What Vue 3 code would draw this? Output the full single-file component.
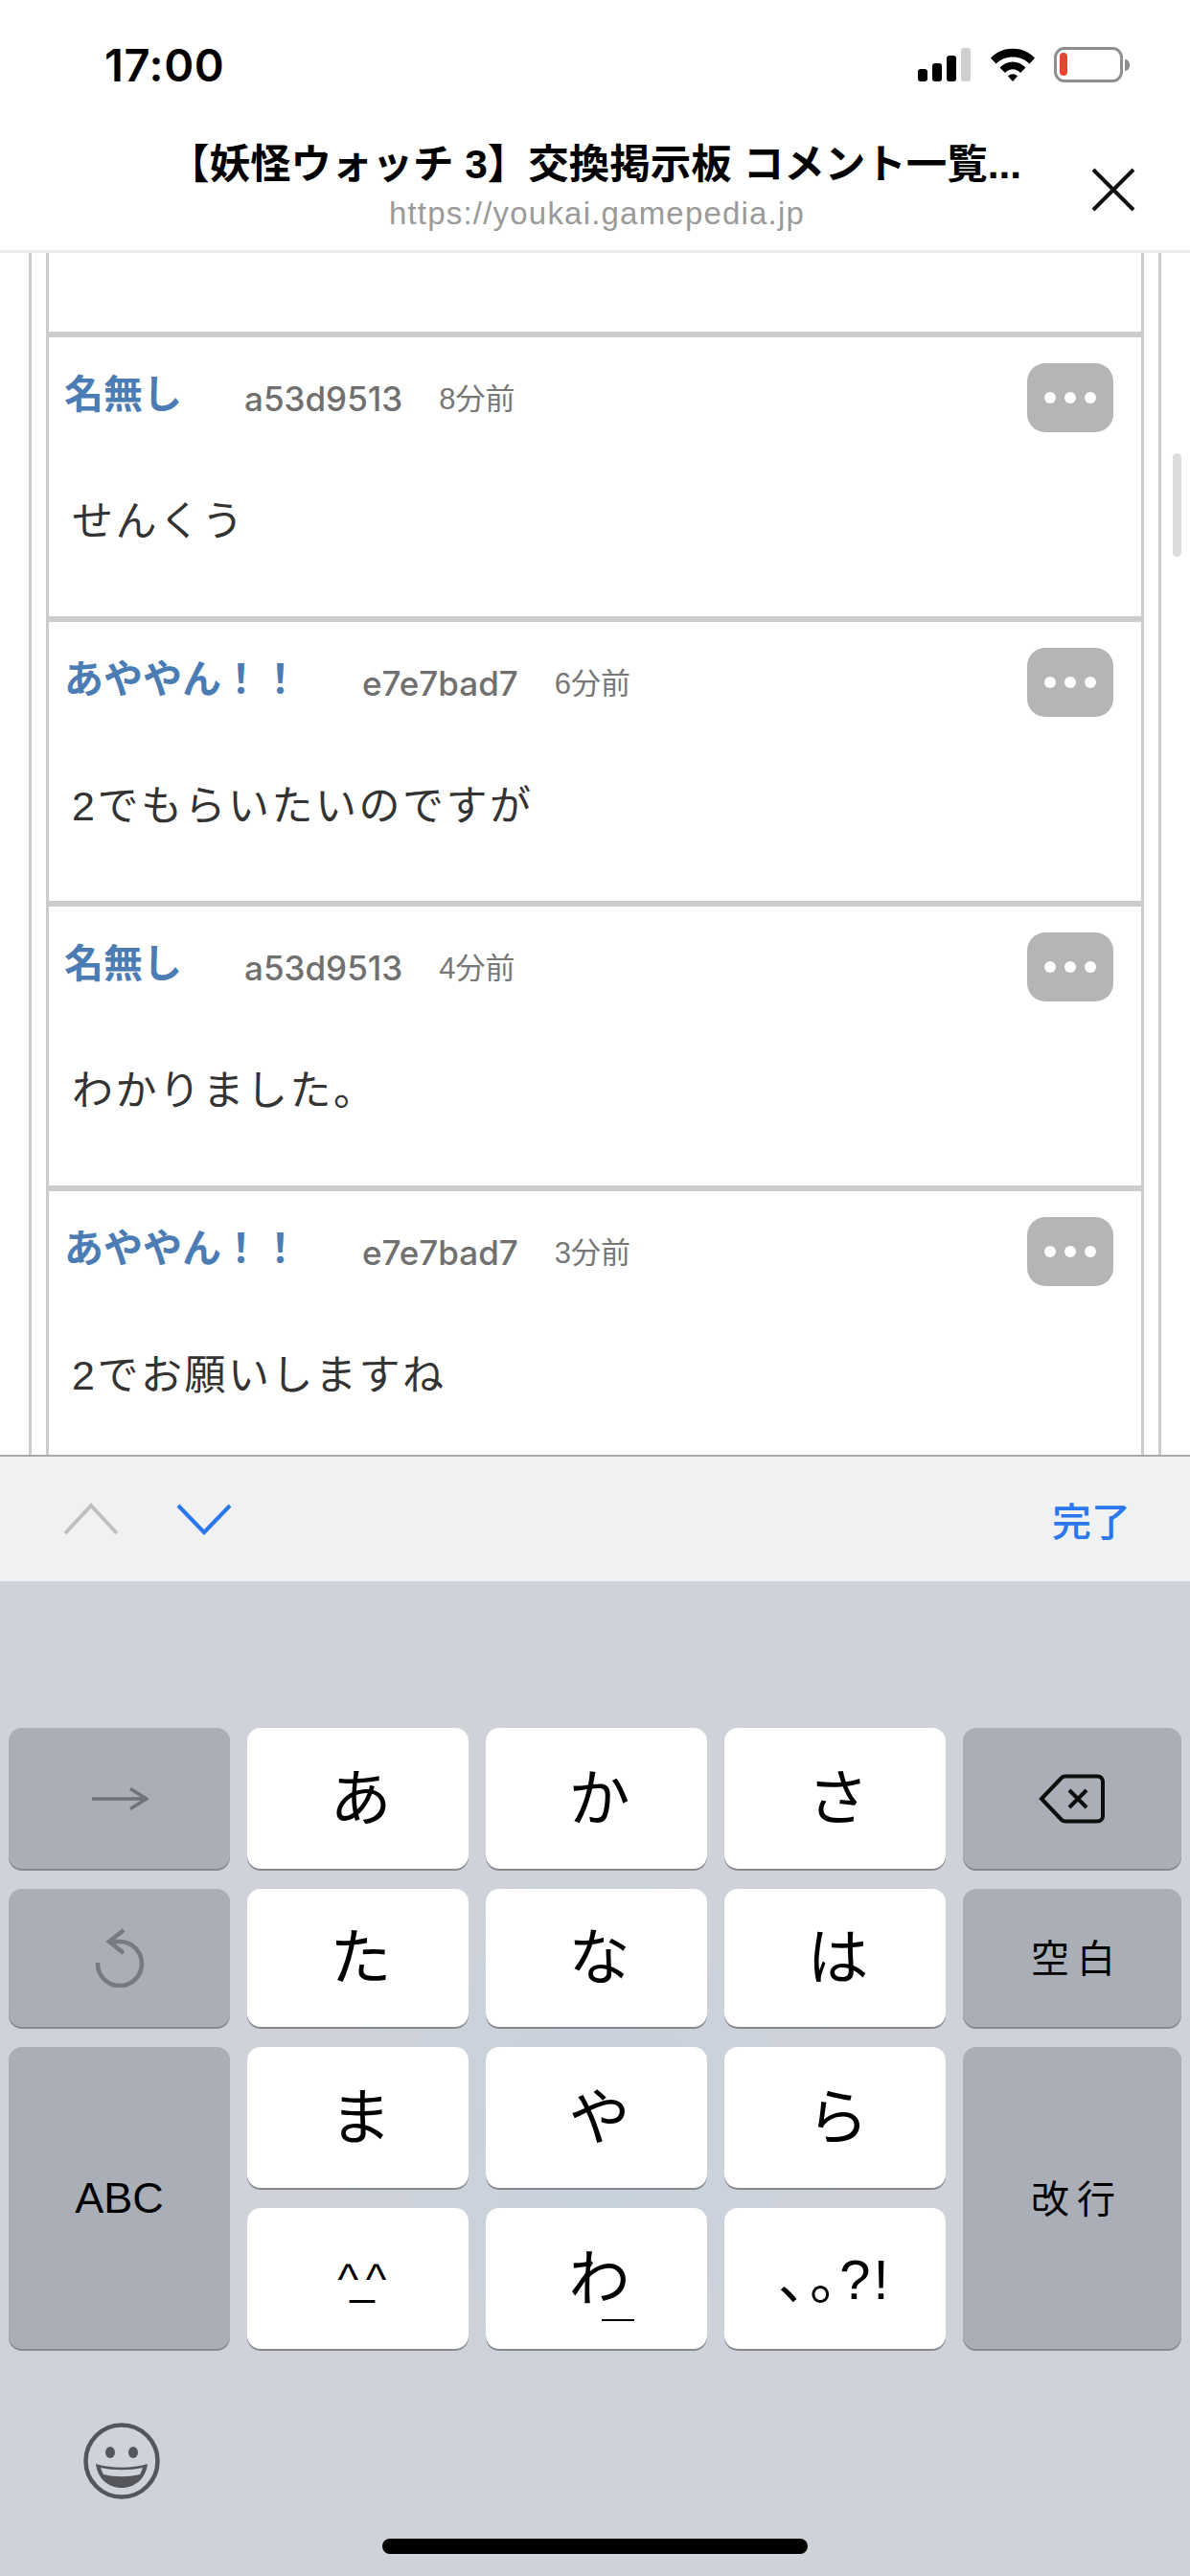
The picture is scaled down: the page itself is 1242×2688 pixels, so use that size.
<script setup>
const comments = [
  { name: '名無し', id: 'a53d9513', time: '8分前', text: 'せんくう' },
  { name: 'あややん！！', id: 'e7e7bad7', time: '6分前', text: '2でもらいたいのですが' },
  { name: '名無し', id: 'a53d9513', time: '4分前', text: 'わかりました。' },
  { name: 'あややん！！', id: 'e7e7bad7', time: '3分前', text: '2でお願いしますね' },
]

const signalBars = [13, 19, 27, 35]
</script>

<template>
  <div class="screen">
    <header class="top-bar">
      <div class="status-bar">
        <span class="clock">17:00</span>
        <div class="status-icons">
          <div class="signal">
            <i v-for="(h, idx) in signalBars" :key="idx" :class="{ off: idx === 3 }" :style="{ height: h + 'px' }"></i>
          </div>
          <svg class="wifi" width="48" height="36" viewBox="0 0 48 36">
            <path d="M1 11.5C13 -1.5 35 -1.5 47 11.5L41.5 17.5C32.5 8 15.5 8 6.5 17.5Z" fill="#000" />
            <path d="M10.5 21.5C18 13.5 30 13.5 37.5 21.5L32 27C27 22 21 22 16 27Z" fill="#000" />
            <path d="M19 30.5C22 27.5 26 27.5 29 30.5L24 36Z" fill="#000" />
          </svg>
          <div class="battery">
            <div class="battery-body"><i></i></div>
            <b></b>
          </div>
        </div>
      </div>
      <div class="title-bar">
        <div class="title-text">
          <div class="title">【妖怪ウォッチ 3】交換掲示板 コメント一覧...</div>
          <div class="url">https://youkai.gamepedia.jp</div>
        </div>
        <svg class="close" width="46" height="46" viewBox="0 0 46 46">
          <path d="M2 2L44 44M44 2L2 44" stroke="#111" stroke-width="4" fill="none" />
        </svg>
      </div>
    </header>

    <main class="content">
      <div class="thread">
        <div class="partial-row"><p>はい</p></div>
        <article v-for="(c, idx) in comments" :key="idx" class="comment">
          <div class="comment-head">
            <span class="name">{{ c.name }}</span>
            <span class="user-id">{{ c.id }}</span>
            <span class="time">{{ c.time }}</span>
            <div class="more"><i></i><i></i><i></i></div>
          </div>
          <p class="body">{{ c.text }}</p>
        </article>
      </div>
      <div class="scrollbar"></div>
    </main>

    <div class="toolbar">
      <svg width="58" height="34" viewBox="0 0 58 34">
        <path d="M2 32L29 3L56 32" stroke="#bfc0c2" stroke-width="4" fill="none" />
      </svg>
      <svg width="58" height="34" viewBox="0 0 58 34" class="chevron-down">
        <path d="M2 3L29 31L56 3" stroke="#2b78ee" stroke-width="4" fill="none" />
      </svg>
      <span class="done">完了</span>
    </div>

    <section class="keyboard">
      <div class="keys">
        <div class="key dark icon">
          <svg width="60" height="24" viewBox="0 0 60 24">
            <path d="M1 12H58M41 1.5L58 12L41 22.5" stroke="#6f737b" stroke-width="3.5" fill="none" />
          </svg>
        </div>
        <div class="key">あ</div>
        <div class="key">か</div>
        <div class="key">さ</div>
        <div class="key dark icon">
          <svg width="70" height="52" viewBox="0 0 70 52">
            <path d="M3 26L24 4C25 3 26 2.5 28 2.5H61C65 2.5 67 5 67 8V44C67 47 65 49.5 61 49.5H28C26 49.5 25 49 24 48Z" stroke="#0d0d0d" stroke-width="4" fill="none" />
            <path d="M32 17L50 35M50 17L32 35" stroke="#0d0d0d" stroke-width="4" fill="none" />
          </svg>
        </div>

        <div class="key dark icon">
          <svg width="52" height="62" viewBox="0 0 52 62">
            <path d="M3 36A23 23 0 1 0 26 14H16M30 2L15 14L30 26" stroke="#767a82" stroke-width="4.5" fill="none" />
          </svg>
        </div>
        <div class="key">た</div>
        <div class="key">な</div>
        <div class="key">は</div>
        <div class="key dark small">空白</div>

        <div class="key dark abc">ABC</div>
        <div class="key">ま</div>
        <div class="key">や</div>
        <div class="key">ら</div>
        <div class="key dark small tall">改行</div>

        <div class="key face">^_^</div>
        <div class="key wa">わ<i></i></div>
        <div class="key punct">、。?!</div>
      </div>

      <svg class="emoji" width="80" height="80" viewBox="0 0 80 80">
        <circle cx="40" cy="40" r="37.5" stroke="#54565b" stroke-width="4.5" fill="none" />
        <ellipse cx="28" cy="31" rx="5" ry="6" fill="#54565b" />
        <ellipse cx="52" cy="31" rx="5" ry="6" fill="#54565b" />
        <path d="M13 43C30 48 50 48 67 43C65 60 52 68 40 68C28 68 15 60 13 43Z" fill="#54565b" />
        <path d="M18 47C32 50 48 50 62 47C61 50 60 52 59 54C46 57 34 57 21 54C20 52 19 50 18 47Z" fill="#d0d2da" />
      </svg>
      <div class="home-bar"></div>
    </section>
  </div>
</template>

<style scoped>
.screen {
  display: flex;
  flex-direction: column;
  width: 1242px;
  height: 2688px;
  overflow: hidden;
  background: #fff;
  font-family: "Liberation Sans", "Noto Sans CJK JP", sans-serif;
}

.top-bar {
  flex: none;
  position: relative;
  z-index: 2;
  height: 264px;
  box-sizing: border-box;
  border-bottom: 3px solid #ececec;
  background: #fff;
}

.status-bar {
  display: flex;
  align-items: flex-start;
  justify-content: space-between;
  height: 146px;
  padding: 0 63px 0 109px;
  box-sizing: border-box;
}

.clock {
  margin-top: 41px;
  font-family: "Inter", "Liberation Sans", sans-serif;
  font-size: 47px;
  line-height: 54px;
  font-weight: 600;
  letter-spacing: 0.6px;
  color: #000;
}

.status-icons {
  display: flex;
  align-items: flex-start;
  margin-top: 49px;
}

.signal {
  display: flex;
  align-items: flex-end;
  gap: 5px;
  height: 36px;
  margin-right: 20px;
}

.signal i {
  width: 10px;
  border-radius: 3px;
  background: #000;
}

.signal i.off {
  background: #cfcfcf;
}

.wifi {
  margin-right: 19px;
}

.battery {
  display: flex;
  align-items: center;
  height: 37px;
}

.battery-body {
  width: 72px;
  height: 37px;
  box-sizing: border-box;
  padding: 3px;
  border: 3px solid #8e8e8e;
  border-radius: 11px;
}

.battery-body i {
  display: block;
  width: 8px;
  height: 24px;
  border-radius: 4px;
  background: #ea4435;
}

.battery b {
  width: 5px;
  height: 12px;
  margin-left: 2px;
  border-radius: 0 5px 5px 0;
  background: #8e8e8e;
}

.title-bar {
  display: flex;
  align-items: flex-start;
  padding-left: 171px;
}

.title-text {
  width: 900px;
  margin-top: 3px;
  text-align: center;
}

.title {
  font-size: 42.5px;
  line-height: 46px;
  font-weight: 700;
  color: #000;
  white-space: nowrap;
}

.url {
  margin: 9px 0 0 4px;
  font-family: "Liberation Sans", sans-serif;
  font-size: 33px;
  line-height: 38px;
  letter-spacing: 1.2px;
  color: #9a9a9a;
}

.close {
  margin: 29px 0 0 68px;
}

.content {
  flex: none;
  position: relative;
  height: 1254px;
  overflow: hidden;
}

.thread {
  width: 1146px;
  height: 100%;
  margin-left: 30px;
  padding: 0 15px;
  border-left: 3px solid #ccc;
  border-right: 3px solid #ccc;
}

.partial-row,
.comment {
  box-sizing: border-box;
  border-left: 3px solid #ccc;
  border-right: 3px solid #ccc;
  background: #fff;
}

.partial-row {
  height: 82px;
  overflow: hidden;
}

.partial-row p {
  margin: -43px 0 0 26px;
  font-size: 43px;
  line-height: 52px;
  color: #333;
}

.comment {
  height: 297px;
  padding: 27px 29px 0 16px;
  border-top: 6px solid #ccc;
}

.comment-head {
  display: flex;
  align-items: flex-start;
  height: 72px;
}

.name {
  margin-top: 9px;
  font-size: 41px;
  line-height: 48px;
  font-weight: 700;
  color: #4b7cb4;
}

.user-id {
  margin: 18px 0 0 65px;
  font-family: "Inter", "Liberation Sans", sans-serif;
  font-size: 35px;
  line-height: 38px;
  font-weight: 500;
  color: #707070;
}

.time {
  margin: 20px 0 0 38px;
  font-size: 31px;
  line-height: 36px;
  color: #777;
}

.more {
  display: flex;
  align-items: center;
  justify-content: center;
  gap: 9px;
  width: 90px;
  height: 72px;
  margin-left: auto;
  border-radius: 19px;
  background: #b5b5b5;
}

.more i {
  width: 12px;
  height: 12px;
  border-radius: 50%;
  background: #fff;
}

.body {
  margin: 67px 0 0 8px;
  font-size: 43px;
  line-height: 52px;
  letter-spacing: 2.5px;
  color: #333;
}

.scrollbar {
  position: absolute;
  top: 209px;
  left: 1224px;
  width: 9px;
  height: 108px;
  border-radius: 5px;
  background: #dcdcdc;
}

.toolbar {
  flex: none;
  display: flex;
  align-items: center;
  height: 132px;
  padding: 0 62px 0 66px;
  box-sizing: border-box;
  border-top: 2px solid #a9a9a9;
  background: #f0f1f2;
}

.chevron-down {
  margin-left: 60px;
}

.done {
  margin-left: auto;
  font-size: 41px;
  font-weight: 500;
  color: #2b78ee;
}

.keyboard {
  flex: none;
  position: relative;
  height: 1038px;
  box-sizing: border-box;
  padding: 153px 9px 0;
  background:
    radial-gradient(ellipse 300px 320px at 620px 570px, #c6d2dd 0%, rgba(198, 210, 221, 0) 100%),
    #d0d2da;
}

.keys {
  display: grid;
  grid-template-columns: 231px 231px 231px 231px 228px;
  grid-template-rows: 147px 144px 147px 147px;
  column-gap: 18px;
  row-gap: 21px;
}

.key {
  display: flex;
  align-items: center;
  justify-content: center;
  padding: 0 0 12px 6px;
  border-radius: 14px;
  background: #fff;
  box-shadow: 0 2px 0 #88898e;
  font-size: 64px;
  color: #000;
}

.key.dark {
  background: #a9aeb7;
}

.key.icon {
  padding: 0;
}

.key.small {
  padding: 0 0 4px 10px;
  font-size: 40px;
  letter-spacing: 8px;
}

.key.abc {
  grid-column: 1;
  grid-row: 3 / 5;
  padding: 0;
  font-size: 45px;
}

.key.tall {
  grid-column: 5;
  grid-row: 3 / 5;
}

.key.face {
  grid-column: 2;
  grid-row: 4;
  padding: 0;
  font-size: 46px;
  letter-spacing: -9px;
}

.wa {
  position: relative;
}

.wa i {
  position: absolute;
  left: 121px;
  top: 116px;
  width: 34px;
  height: 2px;
  background: #000;
}

.key.punct {
  padding: 0 0 8px 0;
  font-size: 58px;
  font-feature-settings: "palt";
  letter-spacing: 3px;
}

.emoji {
  position: absolute;
  left: 87px;
  top: 878px;
}

.home-bar {
  position: absolute;
  left: 399px;
  top: 999px;
  width: 444px;
  height: 16px;
  border-radius: 8px;
  background: #000;
}
</style>

<style>
html,
body {
  margin: 0;
  background: #fff;
}
</style>
